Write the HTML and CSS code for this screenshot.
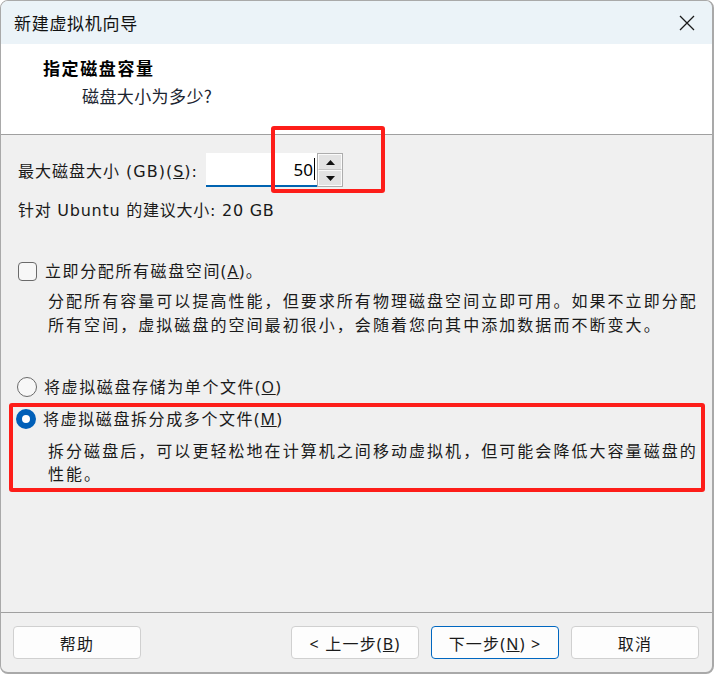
FILE: index.html
```html
<!DOCTYPE html>
<html lang="zh-CN">
<head>
<meta charset="utf-8">
<title>新建虚拟机向导</title>
<link rel="stylesheet" href="styles.css">
</head>
<body>
<div class="window">
  <div class="titlebar">
    <span class="title">新建虚拟机向导</span>
    <svg class="close" width="16" height="16" viewBox="0 0 16 16"><path d="M1 1 L15 15 M15 1 L1 15" stroke="#1a1a1a" stroke-width="1.3" fill="none"/></svg>
  </div>
  <div class="header">
    <div class="h-title">指定磁盘容量</div>
    <div class="h-sub">磁盘大小为多少?</div>
  </div>
  <div class="body">
    <div class="size-row">
      <span class="label">最大磁盘大小 (GB)(<u>S</u>):</span>
      <div class="input"><span class="val">50</span><span class="caret"></span></div>
      <div class="spin">
        <div class="spin-btn"><svg width="9" height="5" viewBox="0 0 9 5"><path d="M0 5 L4.5 0 L9 5 Z" fill="#111"/></svg></div>
        <div class="spin-btn"><svg width="9" height="5" viewBox="0 0 9 5"><path d="M0 0 L4.5 5 L9 0 Z" fill="#111"/></svg></div>
      </div>
    </div>
    <div class="recommend">针对 Ubuntu 的建议大小: 20 GB</div>
    <div class="opt check-row">
      <span class="checkbox"></span>
      <span>立即分配所有磁盘空间(<u>A</u>)。</span>
    </div>
    <div class="desc">分配所有容量可以提高性能，但要求所有物理磁盘空间立即可用。如果不立即分配<br>所有空间，虚拟磁盘的空间最初很小，会随着您向其中添加数据而不断变大。</div>
    <div class="opt radio-row">
      <span class="radio"></span>
      <span>将虚拟磁盘存储为单个文件(<u>O</u>)</span>
    </div>
    <div class="highlight">
      <div class="opt radio-row2">
        <span class="radio checked"></span>
        <span>将虚拟磁盘拆分成多个文件(<u>M</u>)</span>
      </div>
      <div class="desc desc2">拆分磁盘后，可以更轻松地在计算机之间移动虚拟机，但可能会降低大容量磁盘的<br>性能。</div>
    </div>
  </div>
  <div class="footer">
    <button class="btn">帮助</button>
    <span class="spacer"></span>
    <button class="btn">&lt; 上一步(<u>B</u>)</button>
    <button class="btn primary">下一步(<u>N</u>) &gt;</button>
    <button class="btn">取消</button>
  </div>
  <div class="mark"></div>
</div>
</body>
</html>
```
FILE: styles.css
```css
* { box-sizing: border-box; }
html, body { margin: 0; padding: 0; background: #ffffff; }
body {
  font-family: "Noto Sans", "Noto Sans CJK SC", sans-serif;
  color: #1a1a1a;
  font-size: 16px;
}
.window {
  position: relative;
  width: 714px;
  height: 674px;
  border: 1px solid #a9a9a9;
  border-right-width: 2px;
  border-bottom-width: 2px;
  border-radius: 8px;
  overflow: hidden;
  background: #f0f0f0;
  display: flex;
  flex-direction: column;
}
.titlebar {
  height: 43px;
  background: #ebf3f8;
  display: flex;
  align-items: center;
  justify-content: space-between;
  padding: 0 17px 0 13px;
}
.title {
  font-family: "Noto Sans CJK SC", sans-serif;
  font-size: 17px;
  letter-spacing: 0.7px;
  color: #111;
}
.close { display: block; }
.header {
  height: 91px;
  background: #ffffff;
  border-bottom: 1px solid #a0a0a0;
  padding-top: 12px;
}
.h-title {
  font-family: "Noto Sans CJK SC", sans-serif;
  font-weight: bold;
  font-size: 17px;
  letter-spacing: 1.6px;
  line-height: 24px;
  padding-left: 42px;
  color: #000;
}
.h-sub {
  font-family: "Noto Sans CJK SC", sans-serif;
  font-size: 17px;
  letter-spacing: 0.4px;
  line-height: 24px;
  margin-top: 4px;
  padding-left: 81px;
  color: #1b2430;
}
.body {
  flex: 1;
  padding: 18px 0 0 0;
}
.size-row {
  display: flex;
  align-items: center;
  height: 34px;
  padding-left: 17px;
}
.label {
  font-family: "DejaVu Sans", "Noto Sans CJK SC", sans-serif;
  font-size: 16px;
  letter-spacing: 1px;
  margin-right: 8px;
  white-space: nowrap;
}
.input {
  width: 111px;
  height: 34px;
  background: #ffffff;
  border-bottom: 2px solid #0063b1;
  display: flex;
  align-items: center;
  justify-content: flex-end;
  padding-right: 2px;
  font-size: 17px;
  color: #000;
}
.caret {
  display: inline-block;
  width: 1px;
  height: 22px;
  background: #000;
  margin-left: 1px;
}
.spin {
  width: 26px;
  height: 34px;
  display: flex;
  flex-direction: column;
  border: 1px solid #adadad;
  background: #e3e3e3;
}
.spin-btn {
  flex: 1;
  display: flex;
  align-items: center;
  justify-content: center;
  border: 1px solid #fbfbfb;
  border-bottom-color: #c6c6c6;
}
.spin-btn + .spin-btn { border-top-color: #fbfbfb; border-bottom-color: #fbfbfb; }
.recommend {
  font-family: "DejaVu Sans", "Noto Sans CJK SC", sans-serif;
  margin-top: 12px;
  padding-left: 17px;
  line-height: 24px;
  font-size: 16px;
  letter-spacing: 0.75px;
  white-space: nowrap;
}
.opt {
  display: flex;
  align-items: center;
  line-height: 24px;
  font-size: 16px;
  letter-spacing: 1.6px;
  white-space: nowrap;
}
.check-row { margin-top: 36px; padding-left: 17px; }
.checkbox {
  width: 19px;
  height: 19px;
  border: 1px solid #6a6a6a;
  border-radius: 4px;
  background: #f7f7f7;
  margin-right: 8px;
}
.desc {
  margin-top: 6px;
  padding-left: 47px;
  line-height: 24px;
  font-size: 16px;
  letter-spacing: 2.05px;
  color: #1a1a1a;
  white-space: nowrap;
}
.radio-row { margin-top: 38px; padding-left: 16px; }
.radio {
  width: 20px;
  height: 20px;
  border: 1px solid #6a6a6a;
  border-radius: 50%;
  background: #f7f7f7;
  margin-right: 7px;
  flex: none;
}
.radio.checked {
  border: 6px solid #005fb8;
  background: #ffffff;
}
.highlight {
  margin: 4px 7px 0 8px;
  border: 4px solid #fd1d19;
  border-radius: 3px;
  padding: 0 0 2px 3px;
}
.desc2 {
  margin-top: 9px;
  padding-left: 32px;
  line-height: 23px;
}
.footer {
  height: 60px;
  border-top: 1px solid #a0a0a0;
  display: flex;
  align-items: flex-start;
  padding: 13px 13px 0 12px;
  gap: 12px;
}
.spacer { flex: 1; }
.btn {
  width: 128px;
  height: 33px;
  background: #fdfdfd;
  border: 1px solid #d0d0d0;
  border-radius: 4px;
  font-family: "Noto Sans", "Noto Sans CJK SC", sans-serif;
  font-size: 16px;
  letter-spacing: 1.2px;
  color: #1a1a1a;
  padding: 0;
}
.btn.primary { border-color: #0067c0; }
.mark {
  position: absolute;
  left: 270px;
  top: 125px;
  width: 114px;
  height: 67px;
  border: 4px solid #fd1d19;
  border-radius: 3px;
}
```
